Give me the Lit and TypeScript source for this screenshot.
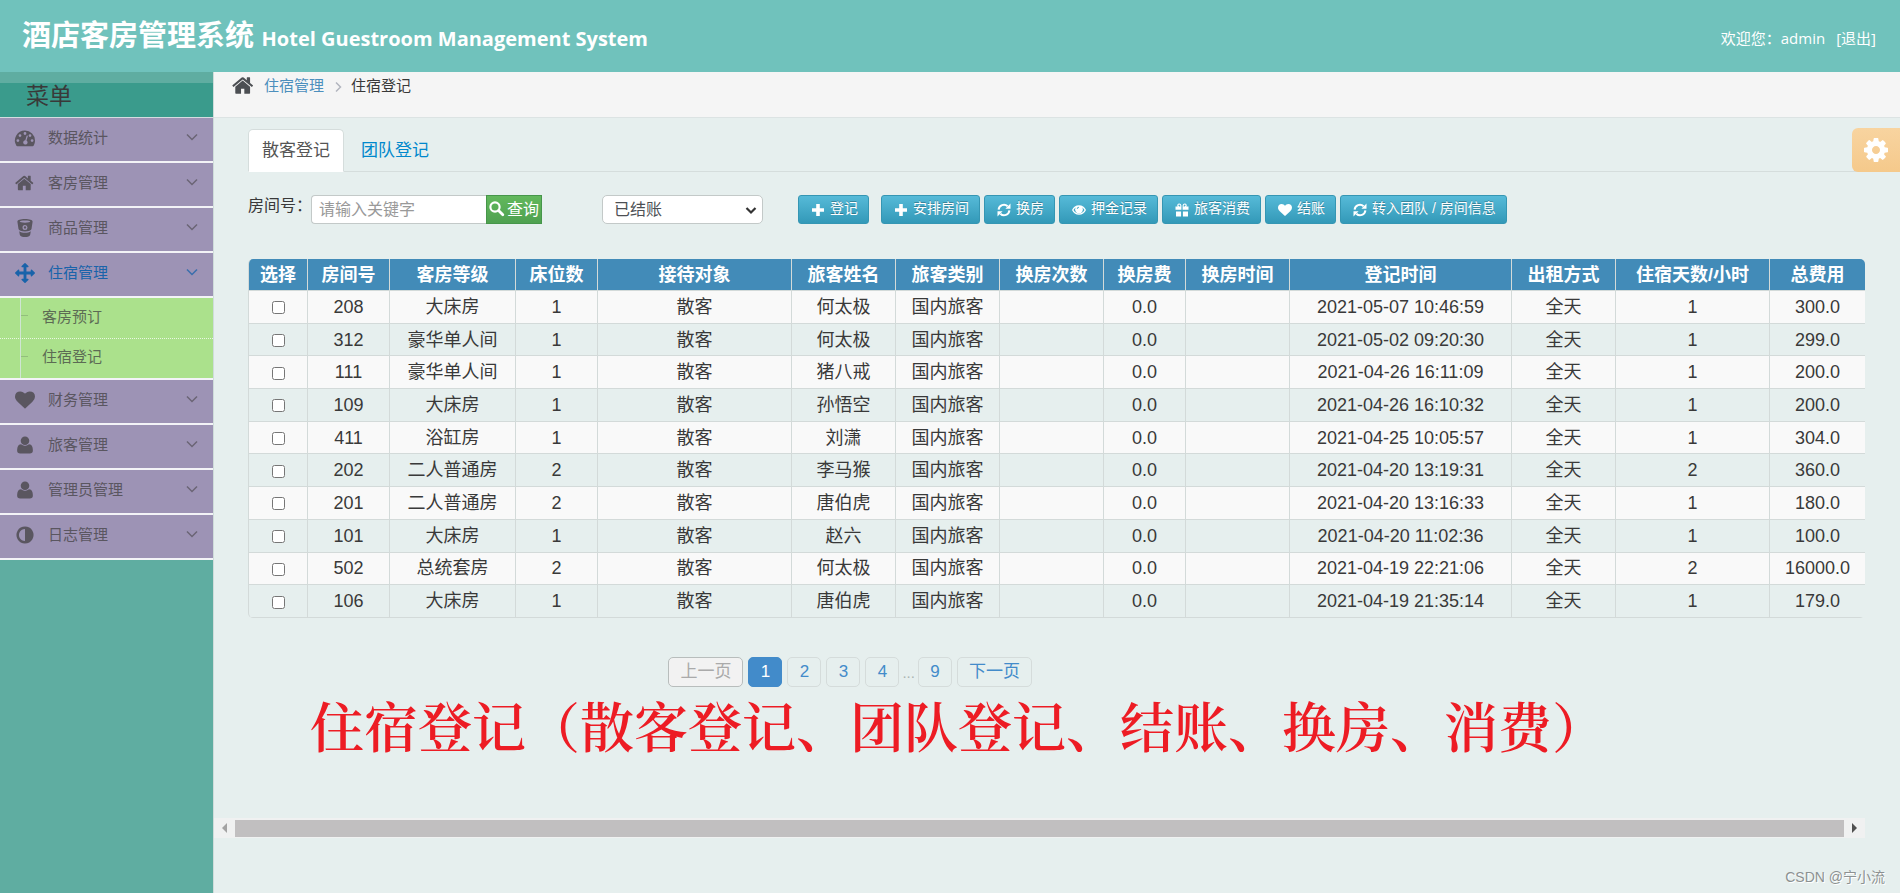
import { LitElement, html, css, svg, nothing } from "lit";
import { customElement, property, state } from "lit/decorators.js";
import { classMap } from "lit/directives/class-map.js";

const ICONS: Record<string, { box: string; body: unknown }> = {
  home: {
    box: "0 0 1792 1792",
    body: svg`<path d="M1408 992v480q0 26-19 45t-45 19h-384v-384h-256v384h-384q-26 0-45-19t-19-45v-480q0-1 .5-3t.5-3l575-474 575 474q1 2 1 6zm223-69l-62 74q-8 9-21 11h-3q-13 0-21-7l-692-577-692 577q-12 8-24 7-13-2-21-11l-62-74q-8-10-7-23.5t11-21.5l719-599q32-26 76-26t76 26l244 204v-195q0-14 9-23t23-9h192q14 0 23 9t9 23v408l219 182q10 8 11 21.5t-7 23.5z"/>`,
  },
  heart: {
    box: "0 0 1792 1792",
    body: svg`<path d="M896 1664q-26 0-44-18l-624-602q-10-8-27.5-26t-55.5-65.5-68-97.5-53.5-121-23.5-138q0-220 127-344t351-124q62 0 126.5 21.5t120 58 95.5 68.5 76 68q36-36 76-68t95.5-68.5 120-58 126.5-21.5q224 0 351 124t127 344q0 221-229 450l-623 600q-18 18-44 18z"/>`,
  },
  user: {
    box: "0 0 1792 1792",
    body: svg`<path d="M1600 1405q0 120-73 189.500t-194 69.500h-874q-121 0-194-69.500t-73-189.500q0-53 3.500-103.500t14-109 26.500-108.500 43-97.500 62-81 85.500-53.500 111.500-20q9 0 42 21.500t74.500 48 108 48 133.500 21.500 133.500-21.500 108-48 74.500-48 42-21.500q61 0 111.500 20t85.500 53.500 62 81 43 97.500 26.500 108.500 14 109 3.500 103.500zm-320-893q0 159-112.500 271.500t-271.500 112.500-271.500-112.500-112.500-271.500 112.500-271.500 271.500-112.500 271.500 112.500 112.500 271.500z"/>`,
  },
  adjust: {
    box: "0 0 1792 1792",
    body: svg`<path d="M896 1440v-1088q-148 0-273 73t-198 198-73 273 73 273 198 198 273 73zm768-544q0 209-103 385.5t-279.5 279.5-385.5 103-385.5-103-279.5-279.5-103-385.5 103-385.5 279.5-279.5 385.5-103 385.5 103 279.5 279.5 103 385.5z"/>`,
  },
  cog: {
    box: "0 0 1792 1792",
    body: svg`<path d="M1152 896q0-106-75-181t-181-75-181 75-75 181 75 181 181 75 181-75 75-181zm512-109v222q0 12-8 23t-20 13l-185 28q-19 54-39 91 35 50 107 138 10 12 10 25t-9 23q-27 37-99 108t-94 71q-12 0-26-9l-138-108q-44 23-91 38-16 136-29 186-7 28-36 28h-222q-14 0-24.5-8.500t-11.500-21.500l-28-184q-49-16-90-37l-141 107q-10 9-25 9-14 0-25-11-126-114-165-168-7-10-7-23 0-12 8-23 15-21 51-66.500t54-70.500q-27-50-41-99l-183-27q-13-2-21-12.500t-8-23.500v-222q0-12 8-23t19-13l186-28q14-46 39-92-40-57-107-138-10-12-10-24 0-10 9-23 26-36 98.500-107.500t94.500-71.500q13 0 26 10l138 107q44-23 91-38 16-136 29-186 7-28 36-28h222q14 0 24.500 8.500t11.500 21.500l28 184q49 16 90 37l142-107q9-9 24-9 13 0 25 10 129 119 165 170 7 8 7 22 0 12-8 23-15 21-51 66.500t-54 70.500q26 50 41 98l183 28q13 2 21 12.500t8 23.500z"/>`,
  },
  arrows: {
    box: "0 0 1792 1792",
    body: svg`<path d="M1792 896q0 26-19 45l-256 256q-19 19-45 19t-45-19-19-45v-128h-384v384h128q26 0 45 19t19 45-19 45l-256 256q-19 19-45 19t-45-19l-256-256q-19-19-19-45t19-45 45-19h128v-384h-384v128q0 26-19 45t-45 19-45-19l-256-256q-19-19-19-45t19-45l256-256q19-19 45-19t45 19 19 45v128h384v-384h-128q-26 0-45-19t-19-45 19-45l256-256q19-19 45-19t45 19l256 256q19 19 19 45t-19 45-45 19h-128v384h384v-128q0-26 19-45t45-19 45 19l256 256q19 19 19 45z"/>`,
  },
  gauge: {
    box: "0 0 20 20",
    body: svg`<path fill-rule="evenodd" d="M10 2.500a10 10 0 0 1 10 10c0 2-.5 3.700-1.400 5.200-.2.300-.5.500-.9.500H2.300c-.4 0-.7-.2-.9-.5A10 10 0 0 1 10 2.500zM2.900 11.200a1.400 1.400 0 1 0 0 2.800 1.400 1.400 0 0 0 0-2.800zm2.100-5a1.400 1.400 0 1 0 0 2.800 1.400 1.400 0 0 0 0-2.800zm5-2.100a1.400 1.400 0 1 0 0 2.800 1.400 1.400 0 0 0 0-2.800zm5 2.100a1.400 1.400 0 1 0 0 2.800 1.400 1.400 0 0 0 0-2.800zm2.100 5a1.400 1.400 0 1 0 0 2.800 1.400 1.400 0 0 0 0-2.800zM11.600 7.900l-1.300 4.300a2.200 2.200 0 1 0 1.200.3l1.300-4.200c.2-.9-.9-1.300-1.200-.4z"/>`,
  },
  bucket: {
    box: "0 0 20 20",
    body: svg`<path fill-rule="evenodd" d="M10 1c4.400 0 7.700 1 7.600 2.700L16.500 11c-.3 1.300-3 2.500-6.500 2.500S3.800 12.300 3.500 11L2.400 3.700C2.300 2 5.600 1 10 1zm0 1.500c-3 0-5.300.5-5.300 1.100s2.300 1.100 5.300 1.100 5.300-.5 5.300-1.100S13 2.500 10 2.500zm0 4.400a2.500 2.500 0 1 0 0 5 2.500 2.500 0 0 0 0-5zm0 1.300a1.200 1.200 0 1 1 0 2.400 1.200 1.200 0 0 1 0-2.400zM4.200 13.200c1.600 1.100 3.500 1.600 5.800 1.600s4.200-.5 5.800-1.600l-.6 3.500c-.3 1.400-2.600 2.300-5.200 2.300s-4.900-.9-5.200-2.300z"/>`,
  },
  plus: { box: "0 0 14 14", body: svg`<path d="M5.200 1h3.600v4.200H13v3.600H8.800V13H5.200V8.800H1V5.200h4.200z"/>` },
  search: {
    box: "0 0 14 14",
    body: svg`<g fill="none" stroke="currentColor"><circle cx="5.600" cy="5.600" r="4.300" stroke-width="2"/><path d="M8.900 8.900l4 4" stroke-width="2.600" stroke-linecap="round"/></g>`,
  },
  refresh: {
    box: "0 0 14 14",
    body: svg`<g fill="none" stroke="currentColor" stroke-width="2"><path d="M1.600 6.600a5.300 5.300 0 0 1 9-3.300"/><path d="M12.400 7.400a5.300 5.300 0 0 1-9 3.300"/></g><path d="M13.500.6v5.100H8.400zM.5 13.400V8.300h5.100z"/>`,
  },
  eye: {
    box: "0 0 14 14",
    body: svg`<path fill-rule="evenodd" d="M7 2.200c3.200 0 5.700 2 7 4.800-1.300 2.800-3.800 4.800-7 4.800S1.300 9.800 0 7c1.300-2.800 3.800-4.800 7-4.800zM3.600 4.500C2.700 5.200 2 6 1.500 7c1.100 2 3.100 3.500 5.500 3.500s4.400-1.500 5.500-3.500c-.5-1-1.200-1.800-2.100-2.500a3.900 3.900 0 1 1-6.800 0zM6.800 3.800c-1.100.1-1.900.9-2 2l.8.200c.1-.7.600-1.200 1.300-1.300z"/>`,
  },
  gift: {
    box: "0 0 14 14",
    body: svg`<path fill-rule="evenodd" d="M.5 3.400h2.100C1.700 2 2.600.4 4.200.4 5.400.4 6.200 1.200 6.400 2.400v4.400H.5zm13 0h-2.100C12.300 2 11.400.4 9.800.4 8.600.4 7.800 1.200 7.600 2.400v4.400h5.900zM1 8.400h5.100v5.100H1zM7.900 8.400H13v5.100H7.900zM4.200 1.600c-1.100.2-1 1.600.2 1.900h1C5.400 2.500 5 1.600 4.200 1.600zm5.600 0c-.8 0-1.200.9-1.200 1.900h1c1.200-.3 1.300-1.700.2-1.900z"/>`,
  },
  down: { box: "0 0 12 12", body: svg`<path d="M1 3.500l5 5 5-5" fill="none" stroke="currentColor" stroke-width="1.500"/>` },
  caret: { box: "0 0 12 12", body: svg`<path d="M1.500 4l4.500 4.500L10.500 4" fill="none" stroke="currentColor" stroke-width="2.200"/>` },
  right: { box: "0 0 12 12", body: svg`<path d="M4 1.500L8.500 6 4 10.500" fill="none" stroke="currentColor" stroke-width="1.500"/>` },
};

@customElement("ui-icon")
class UiIcon extends LitElement {
  static styles = css`
    :host { display: inline-flex; flex: none; }
    svg { width: 100%; height: 100%; fill: currentColor; overflow: visible; }
  `;
  @property() name = "";
  render() {
    const icon = ICONS[this.name];
    return html`<svg viewBox=${icon.box} aria-hidden="true">${icon.body}</svg>`;
  }
}

const MENU = [
  { icon: "gauge", label: "数据统计" },
  { icon: "home", label: "客房管理" },
  { icon: "bucket", label: "商品管理" },
  { icon: "arrows", label: "住宿管理", children: ["客房预订", "住宿登记"] },
  { icon: "heart", label: "财务管理" },
  { icon: "user", label: "旅客管理" },
  { icon: "user", label: "管理员管理" },
  { icon: "adjust", label: "日志管理" },
];

const ACTIONS = [
  ["plus", "登记"],
  ["plus", "安排房间"],
  ["refresh", "换房"],
  ["eye", "押金记录"],
  ["gift", "旅客消费"],
  ["heart", "结账"],
  ["refresh", "转入团队 / 房间信息"],
];

const COLUMNS: [string, number][] = [
  ["选择", 59], ["房间号", 82], ["客房等级", 126], ["床位数", 82], ["接待对象", 194],
  ["旅客姓名", 104], ["旅客类别", 104], ["换房次数", 104], ["换房费", 82], ["换房时间", 104],
  ["登记时间", 222], ["出租方式", 104], ["住宿天数/小时", 154], ["总费用", 95],
];
const TOTAL = COLUMNS.reduce((sum, c) => sum + c[1], 0);

const STAYS = [
  ["208", "大床房", "1", "何太极", "2021-05-07 10:46:59", "1", "300.0"],
  ["312", "豪华单人间", "1", "何太极", "2021-05-02 09:20:30", "1", "299.0"],
  ["111", "豪华单人间", "1", "猪八戒", "2021-04-26 16:11:09", "1", "200.0"],
  ["109", "大床房", "1", "孙悟空", "2021-04-26 16:10:32", "1", "200.0"],
  ["411", "浴缸房", "1", "刘潇", "2021-04-25 10:05:57", "1", "304.0"],
  ["202", "二人普通房", "2", "李马猴", "2021-04-20 13:19:31", "2", "360.0"],
  ["201", "二人普通房", "2", "唐伯虎", "2021-04-20 13:16:33", "1", "180.0"],
  ["101", "大床房", "1", "赵六", "2021-04-20 11:02:36", "1", "100.0"],
  ["502", "总统套房", "2", "何太极", "2021-04-19 22:21:06", "2", "16000.0"],
  ["106", "大床房", "1", "唐伯虎", "2021-04-19 21:35:14", "1", "179.0"],
];

@customElement("app-root")
class AppRoot extends LitElement {
  @state() private tab = 0;

  static styles = css`
    * { box-sizing: border-box; }
    :host {
      display: grid;
      grid-template: auto 1fr / 214px minmax(0, 1fr);
      min-height: 100vh;
      position: relative;
      background: #e6efee;
      color: #393939;
      font: 15px/20px "Open Sans", "Noto Sans CJK SC", sans-serif;
    }
    a { text-decoration: none; color: inherit; }
    button, input, select { font: inherit; color: inherit; margin: 0; }
    ul { list-style: none; margin: 0; padding: 0; }

    .header {
      grid-column: 1 / -1;
      height: 72px;
      padding: 0 24px 0 22px;
      background: #70c2bc;
      color: #fff;
      display: flex;
      align-items: center;
      justify-content: space-between;
    }
    .brand { margin: 0; padding-top: 2px; font-size: 29px; line-height: 40px; font-weight: 700; }
    .brand small { font-size: 20px; }
    .account { display: flex; gap: 11px; padding-top: 4px; }

    .sidebar { background: #5fada1; border-right: 1px solid #cfdcda; padding-top: 11px; }
    .menu-title {
      margin: 0;
      padding-left: 26px;
      font-size: 23px;
      line-height: 24px;
      height: 35px;
      font-weight: 400;
      background: #3a9b8c;
      border-bottom: 1px solid #d5dde0;
    }
    .menu-item {
      width: 100%;
      height: 45px;
      padding: 0 15px 3px;
      border: 0;
      border-bottom: 2px solid #f3f3f7;
      background: #9d93b5;
      color: #5a5660;
      display: flex;
      align-items: center;
      text-align: left;
      cursor: pointer;
    }
    .menu-item.open { color: #1963aa; }
    .menu-item ui-icon { width: 20px; height: 20px; }
    .menu-item .label { flex: 1; padding: 0 0 3px 13px; }
    .menu-item .chevron { width: 12px; height: 12px; opacity: 0.75; margin-bottom: 3px; }
    .submenu { background: #abe18c; border-bottom: 2px solid #f3f3f7; }
    .submenu li { height: 40px; }
    .submenu a {
      display: flex;
      align-items: center;
      gap: 14px;
      height: 100%;
      margin-left: 20px;
      padding-bottom: 5px;
      border-left: 1px solid #cfe5d3;
      color: #5c6b54;
    }
    .submenu a::before { content: ""; width: 7px; border-top: 1px solid #92bf7c; }
    .submenu li + li { border-top: 1px dotted #e9f7e2; }

    .crumbs {
      display: flex;
      height: 46px;
      padding: 3px 18px 0;
      background: #f5f5f5;
      border-bottom: 1px solid #dce3e3;
    }
    .crumbs .house { width: 23px; height: 23px; margin: -1px 9px 0 0; color: #4c4f53; }
    .crumbs a { color: #4c8fbd; }
    .crumbs .sep { width: 12px; height: 12px; margin: 6px 7px 0 8px; color: #b2b6bf; }

    .content { padding: 11px 35px 0 34px; }
    .tabs { display: flex; border-bottom: 1px solid #d5dddc; font-size: 17px; }
    .tab {
      height: 43px;
      margin-bottom: -1px;
      padding: 0 13px 2px;
      margin-right: 3px;
      border: 1px solid transparent;
      border-radius: 5px 5px 0 0;
      background: none;
      color: #0088cc;
      cursor: pointer;
    }
    .tab.active { background: #fff; color: #555; border-color: #d5dddc; border-bottom-color: #fff; }

    .tools { display: flex; align-items: flex-start; padding: 23px 0 35px; font-size: 16px; }
    .field-label { width: 63px; line-height: 20px; white-space: nowrap; }
    .keyword {
      width: 175px;
      height: 29px;
      padding: 0 7px 2px;
      border: 1px solid #c3c9c8;
      border-right: 0;
      border-radius: 4px 0 0 4px;
      background: #fff;
      outline: 0;
    }
    .keyword::placeholder { color: #999; opacity: 1; }
    .query {
      display: flex;
      align-items: center;
      gap: 3px;
      height: 29px;
      padding: 0 2px 2px;
      border: 1px solid #46964a;
      background: linear-gradient(#62b85c, #4fa150);
      color: #fff;
      white-space: nowrap;
    }
    .query ui-icon { width: 15px; height: 15px; }
    .status-box { position: relative; margin: 0 35px 0 60px; display: flex; color: #4c4f53; }
    .status {
      appearance: none;
      width: 161px;
      height: 29px;
      padding: 0 12px 2px 11px;
      border: 1px solid #c3c9c8;
      border-radius: 5px;
      background: #fff;
    }
    .status-box ui-icon {
      position: absolute;
      right: 6px;
      top: 9px;
      width: 12px;
      height: 12px;
      color: #333;
      pointer-events: none;
    }
    .actions { display: flex; gap: 4px; font: 14px/20px "Liberation Sans", "Noto Sans CJK SC", sans-serif; }
    .action {
      display: flex;
      align-items: center;
      gap: 5px;
      height: 29px;
      padding: 0 10px 0 12px;
      border: 1px solid #3596b3;
      border-radius: 3px;
      background: linear-gradient(#56bad8, #3399b8);
      color: #fff;
      text-shadow: 0 -1px 0 rgba(0, 0, 0, 0.25);
      white-space: nowrap;
      cursor: pointer;
    }
    .action:first-child { margin-right: 8px; }
    .action ui-icon { width: 14px; height: 14px; }
    .action .text { padding-bottom: 3px; }

    .stays {
      width: 100%;
      height: 359px;
      table-layout: fixed;
      border-collapse: separate;
      border-spacing: 0;
      border-left: 1px solid #d3dad9;
      border-radius: 5px;
      font: 18px/20px "Liberation Sans", "Noto Sans CJK SC", sans-serif;
      text-align: center;
      overflow: hidden;
    }
    .stays th, .stays td { padding: 0; border-bottom: 1px solid #d3dad9; border-right: 1px solid #d3dad9; white-space: nowrap; }
    .stays th:last-child, .stays td:last-child { border-right: 0; }
    .stays th { height: 32px; background: #428bb8; color: #fff; font-weight: 700; }
    .stays tbody tr:nth-child(odd) { background: #f9f9f9; }
    .stays input { display: block; margin: 2px auto 0; width: 13px; height: 13px; }

    .pager { display: flex; gap: 5px; margin: 39px 0 0 26%; font: 17px/20px "Liberation Sans", "Noto Sans CJK SC", sans-serif; }
    .pager a, .pager .off {
      height: 30px;
      padding: 4px 11px;
      border: 1px solid #d5dcdb;
      border-radius: 5px;
      color: #428bca;
      min-width: 34px;
      text-align: center;
    }
    .pager .off { background: #f2f2f2; border-color: #b8bdbc; color: #aaa; }
    .pager .here { background: #428bca; border-color: #428bca; color: #fff; }
    .pager .dots { color: #aab4b3; font-size: 15px; line-height: 32px; margin: 0 -2px; }

    .note {
      margin: 6px 0 0 62px;
      color: #ed1c24;
      font: 600 54px/60px "Noto Serif CJK SC", "Songti SC", "SimSun", serif;
      white-space: nowrap;
    }
    .scrollbar {
      display: flex;
      align-items: center;
      height: 20px;
      margin: 63px 0 0 -34px;
      padding: 0 8px;
      gap: 8px;
      background: #f0f1f1;
    }
    .scrollbar .thumb { flex: 1; height: 17px; background: #c1bfc0; }
    .scrollbar .left, .scrollbar .right { border: 5px solid transparent; border-width: 5px 0; }
    .scrollbar .left { border-right: 5px solid #a3a3a3; }
    .scrollbar .right { border-left: 5px solid #505050; }

    .settings {
      position: absolute;
      right: 0;
      top: 128px;
      width: 48px;
      height: 44px;
      padding: 0;
      border: 0;
      border-radius: 6px 0 0 6px;
      background: linear-gradient(#f8d4a0, #f5c98b);
      color: #fff;
      display: grid;
      place-items: center;
    }
    .settings ui-icon { width: 28px; height: 28px; }
    .watermark {
      position: absolute;
      right: 15px;
      bottom: 6px;
      color: #8c9191;
      font: 14px/20px "Liberation Sans", "Noto Sans CJK SC", sans-serif;
      text-shadow: 1px 1px 0 #fff;
    }
  `;

  private renderMenu() {
    return MENU.map(
      (m) => html`<li>
        <button class=${classMap({ "menu-item": true, open: !!m.children })} aria-expanded=${m.children ? "true" : "false"}>
          <ui-icon name=${m.icon}></ui-icon><span class="label">${m.label}</span><ui-icon class="chevron" name="down"></ui-icon>
        </button>
        ${m.children
          ? html`<ul class="submenu">${m.children.map((c) => html`<li><a href="#">${c}</a></li>`)}</ul>`
          : nothing}
      </li>`
    );
  }

  private renderTable() {
    return html`<table class="stays">
      <colgroup>${COLUMNS.map(([, w]) => html`<col style="width:${(w / TOTAL) * 100}%" />`)}</colgroup>
      <thead><tr>${COLUMNS.map(([label]) => html`<th scope="col">${label}</th>`)}</tr></thead>
      <tbody>
        ${STAYS.map(
          ([room, level, beds, guest, time, days, cost]) => html`<tr>
            <td><input type="checkbox" aria-label="选择 ${room}" /></td>
            <td>${room}</td><td>${level}</td><td>${beds}</td><td>散客</td><td>${guest}</td><td>国内旅客</td>
            <td></td><td>0.0</td><td></td><td>${time}</td><td>全天</td><td>${days}</td><td>${cost}</td>
          </tr>`
        )}
      </tbody>
    </table>`;
  }

  render() {
    return html`
      <header class="header">
        <h1 class="brand">酒店客房管理系统 <small>Hotel Guestroom Management System</small></h1>
        <div class="account"><span>欢迎您：admin</span><a href="#">[退出]</a></div>
      </header>
      <nav class="sidebar">
        <h2 class="menu-title">菜单</h2>
        <ul>${this.renderMenu()}</ul>
      </nav>
      <main>
        <div class="crumbs">
          <ui-icon class="house" name="home"></ui-icon>
          <a href="#">住宿管理</a><ui-icon class="sep" name="right"></ui-icon><span>住宿登记</span>
        </div>
        <div class="content">
          <div class="tabs" role="tablist">
            ${["散客登记", "团队登记"].map(
              (t, i) => html`<button role="tab" class=${classMap({ tab: true, active: this.tab === i })} @click=${() => (this.tab = i)}>${t}</button>`
            )}
          </div>
          <div class="tools">
            <label class="field-label" for="keyword">房间号：</label>
            <input class="keyword" id="keyword" type="text" placeholder="请输入关键字" />
            <button class="query"><ui-icon name="search"></ui-icon>查询</button>
            <div class="status-box">
              <select class="status" aria-label="结账状态"><option>已结账</option></select>
              <ui-icon name="caret"></ui-icon>
            </div>
            <div class="actions">
              ${ACTIONS.map(([icon, text]) => html`<button class="action"><ui-icon name=${icon}></ui-icon><span class="text">${text}</span></button>`)}
            </div>
          </div>
          ${this.renderTable()}
          <div class="pager">
            <span class="off">上一页</span><a class="here" href="#">1</a><a href="#">2</a><a href="#">3</a><a href="#">4</a>
            <span class="dots">...</span><a href="#">9</a><a href="#">下一页</a>
          </div>
          <p class="note">住宿登记（散客登记、团队登记、结账、换房、消费）</p>
          <div class="scrollbar"><span class="left"></span><span class="thumb"></span><span class="right"></span></div>
        </div>
      </main>
      <button class="settings" aria-label="设置"><ui-icon name="cog"></ui-icon></button>
      <div class="watermark">CSDN @宁小流</div>
    `;
  }
}
